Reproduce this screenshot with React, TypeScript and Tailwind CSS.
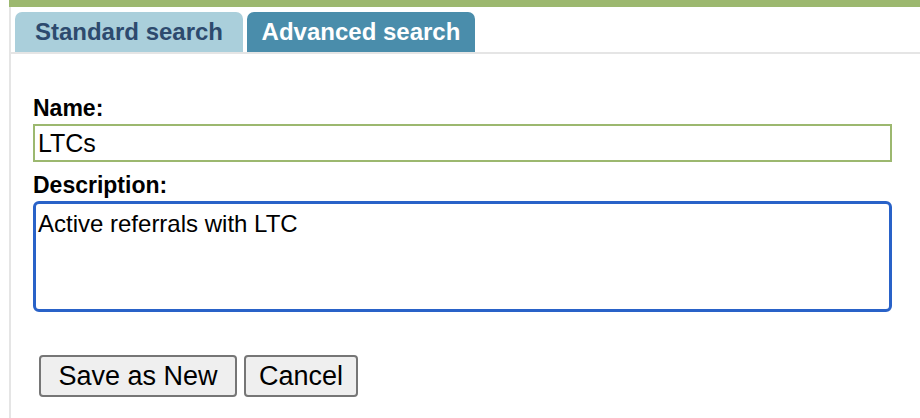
import React from "react";

export default function App() {
  return (
    <div
      className="w-[920px] h-[418px] bg-white pl-[9px] overflow-hidden"
      style={{ fontFamily: '"Liberation Sans", Arial, sans-serif' }}
    >
      <div className="h-[7px] bg-[#9cb86f]" />
      <div className="h-[411px] border-l-2 border-[#e5e5e5] flex flex-col">
        <div className="flex gap-[4px] pl-[4px] pt-[5px] border-b-2 border-[#e5e5e5]">
          <div className="w-[228px] h-[40px] rounded-t-[7px] bg-[#aacfdb] text-[#2d4a6e] font-bold text-[24px] leading-[40px] text-center">
            Standard search
          </div>
          <div className="w-[228px] h-[40px] rounded-t-[7px] bg-[#4a8dab] text-white font-bold text-[24px] leading-[40px] text-center">
            Advanced search
          </div>
        </div>
        <div className="flex flex-col pl-[22px] pr-[28px] pt-[43px]">
          <label className="block font-bold text-[23px] leading-[22px] text-black mb-[5px]">
            Name:
          </label>
          <input
            readOnly
            value="LTCs"
            className="h-[38px] w-full border-2 border-[#9cb86f] px-[3px] text-[25px] text-black outline-none"
            style={{ fontFamily: '"Liberation Sans", Arial, sans-serif' }}
          />
          <label className="block font-bold text-[23px] leading-[22px] text-black mt-[12px] mb-[5px]">
            Description:
          </label>
          <textarea
            readOnly
            value="Active referrals with LTC"
            className="h-[111px] w-full border-[3px] border-[#2962c8] rounded-[6px] px-[2px] pt-[2px] text-[24px] text-black outline-none resize-none"
            style={{ fontFamily: '"Liberation Sans", Arial, sans-serif' }}
          />
          <div className="flex gap-[7px] mt-[43px] ml-[6px]">
            <button className="w-[198px] h-[42px] border-2 border-[#767676] rounded-[4px] bg-[#efefef] text-[27px] text-black leading-none">
              Save as New
            </button>
            <button className="w-[114px] h-[42px] border-2 border-[#767676] rounded-[4px] bg-[#efefef] text-[27px] text-black leading-none">
              Cancel
            </button>
          </div>
        </div>
      </div>
    </div>
  );
}
